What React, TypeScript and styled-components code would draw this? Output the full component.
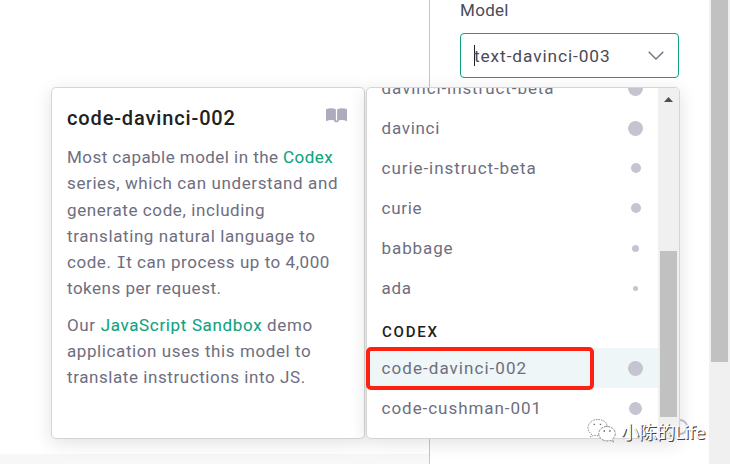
import React from "react";
import styled, { createGlobalStyle } from "styled-components";

const GlobalStyle = createGlobalStyle`
  * { box-sizing: border-box; }
  body { margin: 0; background: #fff; overflow: hidden; font-family: Roboto, "Noto Sans", sans-serif; }
`;

const Page = styled.div`
  position: relative;
  display: flex;
  width: 730px;
  height: 464px;
  overflow: hidden;
  color: #6e6e80;
`;

const Workspace = styled.main`
  display: flex;
  flex-direction: column;
  justify-content: flex-end;
  width: 429px;
`;

const WorkspaceFooter = styled.div`
  height: 10px;
  background: #f7f7f7;
`;

const Settings = styled.aside`
  width: 280px;
  padding: 0 30px;
  border-left: 1px solid #c5c5d2;
`;

const Label = styled.div`
  height: 33px;
  line-height: 20px;
  font-size: 17px;
  letter-spacing: 0.3px;
  color: #4a4b58;
`;

const Select = styled.div`
  display: flex;
  align-items: center;
  justify-content: space-between;
  width: 219px;
  height: 45px;
  padding: 0 14px 0 13px;
  border: 1px solid #10a37f;
  border-radius: 4px;
`;

const SelectValue = styled.div`
  display: flex;
  align-items: center;
  font-size: 17.3px;
  letter-spacing: 0.9px;
  color: #4a4b58;
`;

const Caret = styled.span`
  width: 1px;
  height: 21px;
  margin-right: -1px;
  background: #202123;
`;

const PageScroll = styled.div`
  width: 21px;
  padding: 0 2px;
  background: #f0f0f0;
`;

const PageThumb = styled.div`
  height: 362px;
  background: #c1c1c1;
`;

const HelpRing = styled.div`
  position: absolute;
  left: 672px;
  top: 419px;
  width: 16px;
  height: 16px;
  border: 2px solid #c5c5d2;
  border-radius: 50%;
`;

const Popups = styled.div`
  position: absolute;
  left: 51px;
  top: 87px;
  display: flex;
  gap: 1px;
`;

const Card = styled.section`
  width: 314px;
  height: 352px;
  border: 1px solid #d5d5d6;
  border-radius: 5px;
  background: #fff;
  box-shadow: 0 4px 18px rgba(0, 0, 0, 0.12);
  overflow: hidden;
`;

const Details = styled(Card)`
  padding: 16px 17px 0 15px;
`;

const DetailsHead = styled.header`
  display: flex;
  justify-content: space-between;
  height: 40px;
`;

const Title = styled.h2`
  margin: 0;
  font-size: 20px;
  line-height: 28px;
  font-weight: 500;
  letter-spacing: 0.86px;
  color: #202123;
`;

const BookButton = styled.span`
  display: flex;
  padding-top: 4px;
`;

const Paragraph = styled.p`
  margin: 0 0 10px;
  font-size: 17px;
  line-height: 26.3px;
  white-space: nowrap;
`;

const Line = styled.span<{ $track: number }>`
  display: block;
  letter-spacing: ${(p) => p.$track}px;
`;

const SerifI = styled.span`
  font-family: "DejaVu Sans Mono", monospace;
  font-size: 16.5px;
  line-height: 1;
  letter-spacing: 0;
`;

const Link = styled.a`
  color: #10a37f;
  -webkit-text-stroke: 0.1px #10a37f;
`;

const ModelMenu = styled(Card)`
  display: flex;
`;

const ModelList = styled.div`
  flex: 1;
  margin-top: -20px;
`;

const Row = styled.div<{ $active?: boolean }>`
  display: flex;
  align-items: center;
  justify-content: space-between;
  height: 40px;
  padding: 0 15px;
  font-size: 17px;
  background: ${(p) => (p.$active ? "#eef6f8" : "transparent")};
`;

const RowName = styled.span<{ $track: number }>`
  margin-left: -0.4px;
  letter-spacing: ${(p) => p.$track}px;
`;

const DotCell = styled.span`
  display: flex;
  justify-content: center;
  width: 15px;
`;

const Dot = styled.span<{ $size: number }>`
  width: ${(p) => p.$size}px;
  height: ${(p) => p.$size}px;
  border-radius: 50%;
  background: #c5c5d2;
`;

const GroupName = styled.div`
  height: 40px;
  padding: 7px 15px 0;
  line-height: 35px;
  font-size: 15px;
  font-weight: 500;
  letter-spacing: 1.8px;
  color: #202123;
`;

const MenuScroll = styled.div`
  width: 21px;
  padding: 9px 2px 0;
  background: #f0f0f0;
`;

const UpArrow = styled.svg`
  display: block;
  width: 9px;
  height: 5px;
  margin: 0 auto 149px 4px;
`;

const MenuThumb = styled.div`
  height: 166px;
  width: 17px;
  background: #c1c1c1;
`;

const Highlight = styled.div`
  position: absolute;
  left: 366px;
  top: 347px;
  width: 228px;
  height: 43px;
  border: 4px solid #fe2010;
  border-radius: 5px;
`;

const Watermark = styled.div`
  position: absolute;
  left: 587px;
  top: 416px;
  display: flex;
  align-items: center;
  gap: 5px;
  height: 30px;
  font-family: "Noto Sans", "Noto Sans CJK SC", sans-serif;
  font-size: 18px;
  white-space: nowrap;
  color: #fff;
  text-shadow: 1px 1px 0.5px #444, 0.5px 0.5px 0 #888;
`;

const models = [
  { name: "davinci-instruct-beta", size: 15, track: 0.91 },
  { name: "davinci", size: 15, track: 0.7 },
  { name: "curie-instruct-beta", size: 10, track: 0.93 },
  { name: "curie", size: 10, track: 0.7 },
  { name: "babbage", size: 7, track: 0.88 },
  { name: "ada", size: 5, track: 0.65 },
];

const codexModels = [
  { name: "code-davinci-002", size: 15, track: 1.05, active: true },
  { name: "code-cushman-001", size: 13, track: 0.95, active: false },
];

type Model = { name: string; size: number; track: number; active?: boolean };

const ModelRow = ({ name, size, track, active }: Model) => (
  <Row $active={active}>
    <RowName $track={track}>{name}</RowName>
    <DotCell>
      <Dot $size={size} />
    </DotCell>
  </Row>
);

const BookIcon = () => (
  <svg width="21" height="15" viewBox="0 0 21 15">
    <path
      fill="#acacbe"
      d="M0 1.2C3.2-.2 7-.2 9.9 1.3V13C7 11.7 3.4 11.7 0 13.2ZM11.1 1.3C14-.2 17.8-.2 21 1.2V13.2C17.6 11.7 14 11.7 11.1 13ZM8 12.5h5l-1 1.7H9Z"
    />
  </svg>
);

const ChatIcon = () => (
  <svg width="29" height="26" viewBox="0 0 29 26" fill="#fff" stroke="#666" strokeWidth="0.7">
    <path
      strokeDasharray="1.6 1"
      d="M10.5 1.5C5 1.5 1 5.2 1 9.7c0 2.7 1.4 4.8 3.5 6.3L3.5 19l3.6-1.8c1.4.4 2.8.6 4.2.5M20 8c0-4-4-6.5-9.5-6.5"
    />
    <path
      strokeDasharray="3 .8"
      d="M20 8.5c-4.8 0-8.3 3.2-8.3 7.2s3.7 7.2 8.3 7.2c1.1 0 2.2-.2 3.2-.6l3.2 1.8-.9-3c1.7-1.3 2.8-3.1 2.8-5.4 0-4-3.7-7.2-8.3-7.2Z"
    />
    <path fill="none" d="M6.5 6.4h1.4M12.8 6.4h1.4M16.5 13h1.5M22.2 13h1.5" strokeWidth="1.3" />
  </svg>
);

export default function App() {
  return (
    <Page>
      <GlobalStyle />
      <Workspace>
        <WorkspaceFooter />
      </Workspace>
      <Settings>
        <Label>Model</Label>
        <Select>
          <SelectValue>
            <Caret />
            text-davinci-003
          </SelectValue>
          <svg width="16" height="9" viewBox="0 0 16 9" fill="none" stroke="#6e6e80" strokeWidth="1.3">
            <path d="M.7.7 8 8 15.3.7" />
          </svg>
        </Select>
      </Settings>
      <PageScroll>
        <PageThumb />
      </PageScroll>
      <HelpRing />
      <Popups>
        <Details>
          <DetailsHead>
            <Title>code-davinci-002</Title>
            <BookButton>
              <BookIcon />
            </BookButton>
          </DetailsHead>
          <Paragraph>
            <Line $track={0.45}>
              Most capable model in the <Link>Codex</Link>
            </Line>
            <Line $track={0.61}>series, which can understand and</Line>
            <Line $track={0.6}>generate code, including</Line>
            <Line $track={0.6}>translating natural language to</Line>
            <Line $track={0.55}>
              code. <SerifI>I</SerifI>t can process up to 4,000
            </Line>
            <Line $track={0.5}>tokens per request.</Line>
          </Paragraph>
          <Paragraph>
            <Line $track={0.65}>
              Our <Link>JavaScript Sandbox</Link> demo
            </Line>
            <Line $track={0.59}>application uses this model to</Line>
            <Line $track={0.57}>translate instructions into JS.</Line>
          </Paragraph>
        </Details>
        <ModelMenu>
          <ModelList>
            {models.map((m) => (
              <ModelRow key={m.name} {...m} />
            ))}
            <GroupName>CODEX</GroupName>
            {codexModels.map((m) => (
              <ModelRow key={m.name} {...m} />
            ))}
          </ModelList>
          <MenuScroll>
            <UpArrow viewBox="0 0 9 5">
              <path fill="#505050" d="M4.5 0 9 5H0Z" />
            </UpArrow>
            <MenuThumb />
          </MenuScroll>
        </ModelMenu>
      </Popups>
      <Highlight />
      <Watermark>
        <ChatIcon />
        小陈的Life
      </Watermark>
    </Page>
  );
}
